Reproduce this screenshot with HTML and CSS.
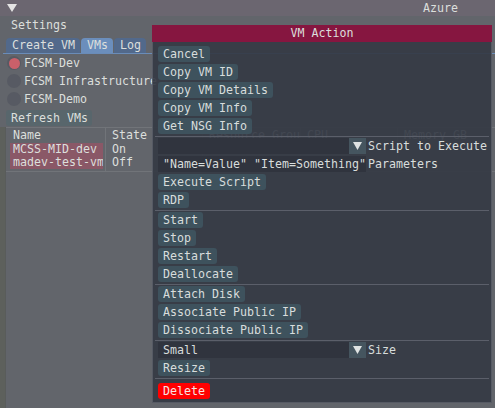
FILE: index.html
```html
<!DOCTYPE html>
<html>
<head>
<meta charset="utf-8">
<link rel="stylesheet" href="styles.css">
</head>
<body>
<div class="app">
  <header class="titlebar">
    <svg class="collapse" width="10" height="8" viewBox="0 0 10 8"><polygon points="0,0 10,0 5,8" fill="#e4e4e4"/></svg>
    <span class="wtitle">Azure</span>
  </header>
  <main class="panel">
    <div class="settings">Settings</div>
    <nav class="tabs">
      <span class="tab">Create VM</span><span class="tab active">VMs</span><span class="tab">Log</span>
    </nav>
    <div class="radios">
      <div class="radio"><span class="dot on"></span><span>FCSM-Dev</span></div>
      <div class="radio"><span class="dot"></span><span>FCSM Infrastructure</span></div>
      <div class="radio"><span class="dot"></span><span>FCSM-Demo</span></div>
    </div>
    <div class="refresh-row"><button class="btn refresh">Refresh VMs</button></div>
    <section class="lower">
      <div class="strip"></div>
      <div class="table">
        <div class="cell head c1">Name</div>
        <div class="cell head">State</div>
        <div class="cell head">Resource Group</div>
        <div class="cell head">CPU</div>
        <div class="cell head last">Memory GB</div>

        <div class="cell c1"><div class="selrow">MCSS-MID-dev</div></div>
        <div class="cell">On</div>
        <div class="cell"></div>
        <div class="cell"></div>
        <div class="cell last"></div>

        <div class="cell c1 end"><div class="selrow">madev-test-vm</div></div>
        <div class="cell end">Off</div>
        <div class="cell end"></div>
        <div class="cell end"></div>
        <div class="cell end last"></div>
      </div>
    </section>
  </main>

  <div class="popup">
    <div class="ptitle">VM Action</div>
    <div class="pbody">
      <button class="btn">Cancel</button>
      <button class="btn">Copy VM ID</button>
      <button class="btn">Copy VM Details</button>
      <button class="btn">Copy VM Info</button>
      <button class="btn">Get NSG Info</button>
      <div class="sep"></div>
      <div class="field">
        <div class="combo"><span class="cval"></span><span class="arrow"><svg width="9" height="8" viewBox="0 0 9 8"><polygon points="0,0 9,0 4.5,8" fill="#dfe3e3"/></svg></span></div>
        <span class="flabel">Script to Execute</span>
      </div>
      <div class="field">
        <div class="input">"Name=Value" "Item=Something"</div>
        <span class="flabel">Parameters</span>
      </div>
      <button class="btn">Execute Script</button>
      <button class="btn">RDP</button>
      <div class="sep"></div>
      <button class="btn">Start</button>
      <button class="btn">Stop</button>
      <button class="btn">Restart</button>
      <button class="btn">Deallocate</button>
      <div class="sep"></div>
      <button class="btn">Attach Disk</button>
      <button class="btn">Associate Public IP</button>
      <button class="btn">Dissociate Public IP</button>
      <div class="sep"></div>
      <div class="field">
        <div class="combo"><span class="cval">Small</span><span class="arrow"><svg width="9" height="8" viewBox="0 0 9 8"><polygon points="0,0 9,0 4.5,8" fill="#dfe3e3"/></svg></span></div>
        <span class="flabel">Size</span>
      </div>
      <button class="btn">Resize</button>
      <div class="sep"></div>
      <button class="btn danger">Delete</button>
    </div>
  </div>
</div>
</body>
</html>
```

FILE: styles.css
```css
* { box-sizing: border-box; }

html, body {
  margin: 0;
  padding: 0;
  background: #62656b;
}

.app {
  position: relative;
  width: 495px;
  height: 408px;
  overflow: hidden;
  background: #62656b;
  font-family: "DejaVu Sans Mono", "Liberation Mono", monospace;
  font-size: 11.63px;
  line-height: 13px;
  color: #dcdfdc;
  display: flex;
  flex-direction: column;
}

.titlebar {
  height: 16px;
  flex: 0 0 16px;
  background: #6b6670;
  display: flex;
  align-items: center;
  padding: 0 37px 0 7px;
}

.collapse { display: block; }

.wtitle {
  margin-left: auto;
}

.panel {
  flex: 1;
  display: flex;
  flex-direction: column;
  padding-left: 6px;
  min-height: 0;
}

.settings {
  margin-top: 3px;
  padding-left: 5px;
  height: 13px;
}

.tabs {
  margin-top: 6px;
  display: flex;
  gap: 1px;
  height: 16px;
  margin-left: -3px;
  padding-left: 3px;
  border-bottom: 1px solid #6a8cb8;
}

.tab {
  height: 15px;
  line-height: 15px;
  padding: 0 5px 0 6px;
  background: #52698b;
  border-radius: 4px 4px 0 0;
}

.tab.active {
  background: #6b8ebc;
}

.radios {
  margin-top: 2px;
  display: flex;
  flex-direction: column;
  gap: 4px;
}

.radio {
  height: 14px;
  display: flex;
  align-items: center;
  gap: 3px;
  white-space: nowrap;
}

.dot {
  width: 14px;
  height: 14px;
  margin-left: 1px;
  border-radius: 50%;
  background: #575a63;
  display: flex;
  align-items: center;
  justify-content: center;
  flex: 0 0 14px;
}

.dot.on::after {
  content: "";
  width: 11px;
  height: 11px;
  border-radius: 50%;
  background: #c9606a;
}

.refresh-row {
  margin-top: 4px;
  display: flex;
}

.btn {
  font: inherit;
  color: inherit;
  border: 0;
  margin: 0;
  height: 16px;
  line-height: 16px;
  padding: 0 5px;
  border-radius: 3px;
  background: #3e525d;
  text-align: left;
  white-space: nowrap;
  flex: 0 0 16px;
}

.btn.refresh {
  background: #58666c;
  padding: 0 4px 0 5px;
}

.lower {
  margin-top: 1px;
  margin-left: -6px;
  flex: 1;
  display: flex;
}

.strip {
  width: 6px;
  background: #5d605c;
  border-right: 1px solid #595c5b;
}

.table {
  align-self: flex-start;
  display: grid;
  grid-template-columns: 100px 97px 98px 97px 97px;
  border-top: 1px solid #717479;
  border-bottom: 1px solid #717479;
}

.cell {
  height: 13px;
  padding-left: 6px;
  white-space: nowrap;
  overflow: hidden;
  border-right: 1px solid #717479;
}

.cell.last { border-right: 0; }

.cell.head {
  height: 15px;
  line-height: 15px;
}

.cell.end {
  height: 15px;
  padding-bottom: 2px;
}

.cell.c1 {
  padding-left: 4px;
}

.cell.c1.head {
  padding-left: 7px;
}

.selrow {
  height: 13px;
  margin-right: 2px;
  padding-left: 3px;
  background: #8a5867;
  overflow: hidden;
  white-space: nowrap;
}

.popup {
  position: absolute;
  left: 152px;
  top: 25px;
  width: 340px;
  height: 378px;
  background: rgba(52, 57, 68, 0.92);
  border: 1px solid #565a64;
  border-top: 0;
  display: flex;
  flex-direction: column;
}

.ptitle {
  height: 17px;
  line-height: 17px;
  background: #861640;
  text-align: center;
  margin: 0 -1px;
  flex: 0 0 17px;
}

.pbody {
  padding: 4px 5px 4px 5px;
  display: flex;
  flex-direction: column;
  align-items: flex-start;
  gap: 2px;
  color: #d8dddc;
}

.sep {
  align-self: stretch;
  height: 1px;
  flex: 0 0 1px;
  margin: 0 -3px -1px;
  background: #5b5f6a;
}

.field {
  display: flex;
  align-items: center;
  height: 16px;
  flex: 0 0 16px;
  white-space: nowrap;
}

.combo {
  width: 208px;
  height: 16px;
  display: flex;
  flex: 0 0 208px;
  background: #30343e;
}

.cval {
  flex: 1;
  padding-left: 5px;
  line-height: 16px;
}

.arrow {
  width: 17px;
  height: 16px;
  background: #45555f;
  display: flex;
  align-items: center;
  justify-content: center;
}

.arrow svg { display: block; }

.input {
  width: 208px;
  flex: 0 0 208px;
  height: 16px;
  line-height: 16px;
  padding-left: 5px;
  background: #30343e;
  white-space: nowrap;
  overflow: visible;
}

.flabel {
  margin-left: 2px;
  line-height: 16px;
  white-space: nowrap;
  flex: 0 0 auto;
}

.btn.danger {
  margin-top: 3px;
  background: #ff0000;
  color: #f8e4e4;
}
```
